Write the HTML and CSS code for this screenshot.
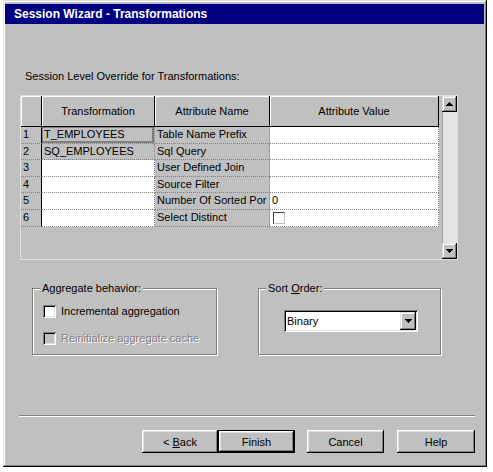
FILE: index.html
```html
<!DOCTYPE html>
<html>
<head>
<meta charset="utf-8">
<link rel="stylesheet" href="styles.css">
</head>
<body>
<div class="window">
  <div class="titlebar">Session Wizard - Transformations</div>
  <div class="content">
    <div class="caption">Session Level Override for Transformations:</div>
    <div class="grid-frame">
      <div class="grid">
        <div class="hcell"></div>
        <div class="hcell">Transformation</div>
        <div class="hcell">Attribute Name</div>
        <div class="hcell">Attribute Value</div>

        <div class="rh">1</div><div class="c ro focus">T_EMPLOYEES</div><div class="c ro">Table Name Prefix</div><div class="c"></div>
        <div class="rh">2</div><div class="c ro">SQ_EMPLOYEES</div><div class="c ro">Sql Query</div><div class="c"></div>
        <div class="rh">3</div><div class="c"></div><div class="c ro">User Defined Join</div><div class="c"></div>
        <div class="rh">4</div><div class="c"></div><div class="c ro">Source Filter</div><div class="c"></div>
        <div class="rh">5</div><div class="c"></div><div class="c ro">Number Of Sorted Por</div><div class="c">0</div>
        <div class="rh">6</div><div class="c"></div><div class="c ro">Select Distinct</div><div class="c"><span class="cellbox"></span></div>
      </div>
      <div class="vscroll">
        <div class="sbtn"><svg width="7" height="4" viewBox="0 0 7 4"><path d="M3 0h1v1h1v1h1v1h1v1H0V3h1V2h1V1h1z" fill="#000"/></svg></div>
        <div class="track"></div>
        <div class="sbtn"><svg width="7" height="4" viewBox="0 0 7 4"><path d="M0 0h7v1H6v1H5v1H4v1H3V3H2V2H1V1H0z" fill="#000"/></svg></div>
      </div>
    </div>

    <div class="groups">
      <div class="group group-agg">
        <span class="group-title">Aggregate behavior:</span>
        <div class="check-row"><span class="check"></span><span>Incremental aggregation</span></div>
        <div class="check-row disabled"><span class="check"></span><span>Reinitialize aggregate cache</span></div>
      </div>
      <div class="group group-sort">
        <span class="group-title">Sort <u>O</u>rder:</span>
        <div class="combo">
          <span class="combo-text">Binary</span>
          <span class="combo-btn"><svg width="7" height="4" viewBox="0 0 7 4"><path d="M0 0h7v1H6v1H5v1H4v1H3V3H2V2H1V1H0z" fill="#000"/></svg></span>
        </div>
      </div>
    </div>

    <div class="sep"></div>

    <div class="buttons">
      <div class="btn btn-back"><span>&lt; <u>B</u>ack</span></div>
      <div class="btn btn-default"><span>Finish</span></div>
      <div class="btn btn-cancel"><span>Cancel</span></div>
      <div class="btn btn-help"><span>Help</span></div>
    </div>
  </div>
</div>
</body>
</html>
```

FILE: styles.css
```css
* { box-sizing: border-box; }

body {
  margin: 0;
  background: #ffffff;
  font-family: "Liberation Sans", Arial, sans-serif;
  font-size: 11px;
  color: #000;
}

.window {
  margin-left: 3px;
  width: 484px;
  height: 467px;
  background: #c0c0c0;
  padding: 4px 3px 0 2px;
  box-shadow: inset -1px -1px 0 #000, inset 1px 1px 0 #dfdfdf,
              inset -2px -2px 0 #808080, inset 2px 2px 0 #fff;
}

.titlebar {
  height: 20px;
  background: #000080;
  color: #fff;
  font-weight: bold;
  font-size: 12px;
  line-height: 20px;
  padding-left: 9px;
}

.content {
  display: flex;
  flex-direction: column;
  padding: 0 9px 0 15px;
}

.caption {
  margin-top: 46px;
  line-height: 13px;
  padding-left: 5px;
}

.grid-frame {
  margin-top: 12px;
  width: 438px;
  height: 165px;
  display: flex;
  align-items: flex-start;
  border: 1px solid #dfdfdf;
  background: #c0c0c0;
}

.grid {
  width: 418px;
  display: grid;
  grid-template-columns: 21px 113px 115px 169px;
  grid-template-rows: 31px repeat(6, 16.6px);
  margin-right: 3px;
}

.hcell {
  border-right: 1px solid #000;
  border-bottom: 1px solid #000;
  box-shadow: inset 1px 1px 0 #fff;
  display: flex;
  align-items: center;
  justify-content: center;
  padding-bottom: 1px;
  white-space: nowrap;
}

.rh {
  border-right: 1px solid #000;
  border-bottom: 1px dotted #808080;
  padding-left: 2px;
  line-height: 15px;
  overflow: hidden;
}

.c {
  background: #fff;
  border-right: 1px dotted #808080;
  border-bottom: 1px dotted #808080;
  padding-left: 2px;
  line-height: 15px;
  white-space: nowrap;
  overflow: hidden;
}

.c.ro { background: #c0c0c0; }

.c.focus { box-shadow: inset 0 0 0 1px #808080, inset -1px -1px 0 1px #808080; }

.cellbox {
  display: block;
  width: 12px;
  height: 12px;
  margin: 2px 0 0 1px;
  background: #fff;
  border: 1px solid;
  border-color: #404040 #c0c0c0 #c0c0c0 #404040;
}

.vscroll {
  width: 15px;
  height: 163px;
  display: flex;
  flex-direction: column;
}

.sbtn {
  height: 16px;
  background: #c0c0c0;
  display: flex;
  align-items: center;
  justify-content: center;
  box-shadow: inset -1px -1px 0 #000, inset 1px 1px 0 #dfdfdf,
              inset -2px -2px 0 #808080, inset 2px 2px 0 #fff;
}

.sbtn svg { display: block; }

.track {
  flex: 1;
  background: #e4e4e4;
  border-left: 1px solid #a0a0a0;
}

.groups {
  display: flex;
  margin-top: 28px;
  padding-left: 12px;
}

.group {
  position: relative;
  height: 67px;
  border: 1px solid #808080;
  box-shadow: inset 1px 1px 0 #fff, 1px 1px 0 #fff;
}

.group-title {
  position: absolute;
  top: -7px;
  left: 7px;
  padding: 0 2px;
  line-height: 13px;
  background: #c0c0c0;
  white-space: nowrap;
}

.group-agg {
  width: 185px;
  padding: 16px 0 0 10px;
}

.group-sort {
  width: 183px;
  margin-left: 41px;
  padding: 21px 0 0 25px;
}

.check-row {
  display: flex;
  align-items: center;
  gap: 5px;
  height: 13px;
  line-height: 13px;
  margin-bottom: 14px;
  white-space: nowrap;
}

.check {
  width: 13px;
  height: 13px;
  background: #fff;
  box-shadow: inset 1px 1px 0 #808080, inset -1px -1px 0 #fff,
              inset 2px 2px 0 #000, inset -2px -2px 0 #dfdfdf;
}

.check-row.disabled { color: #808080; text-shadow: 1px 1px 0 #fff; }
.check-row.disabled .check { background: #c0c0c0; }

.combo {
  width: 134px;
  height: 22px;
  background: #fff;
  display: flex;
  align-items: center;
  justify-content: space-between;
  padding: 2px;
  box-shadow: inset 1px 1px 0 #808080, inset -1px -1px 0 #fff,
              inset 2px 2px 0 #000, inset -2px -2px 0 #dfdfdf;
}

.combo-text { padding-left: 1px; line-height: 18px; }

.combo-btn {
  width: 16px;
  height: 18px;
  background: #c0c0c0;
  display: flex;
  align-items: center;
  justify-content: center;
  box-shadow: inset -1px -1px 0 #000, inset 1px 1px 0 #dfdfdf,
              inset -2px -2px 0 #808080, inset 2px 2px 0 #fff;
}

.combo-btn svg { display: block; }

.sep {
  margin-top: 60px;
  margin-left: -1px;
  height: 2px;
  border-top: 1px solid #808080;
  border-bottom: 1px solid #fff;
}

.buttons {
  display: flex;
  justify-content: flex-end;
  margin-top: 13px;
}

.btn {
  height: 23px;
  display: flex;
  align-items: center;
  justify-content: center;
  background: #c0c0c0;
  white-space: pre;
  box-shadow: inset -1px -1px 0 #000, inset 1px 1px 0 #fff,
              inset -2px -2px 0 #808080, inset 2px 2px 0 #dfdfdf;
}

.btn-back { width: 76px; }

.btn-default {
  width: 77px;
  box-shadow: inset 0 0 0 1px #000, inset -2px -2px 0 #000, inset 2px 2px 0 #fff,
              inset -3px -3px 0 #808080, inset 3px 3px 0 #dfdfdf;
}

.btn-cancel { width: 77px; margin-left: 12px; }
.btn-help { width: 78px; margin-left: 13px; }
```
